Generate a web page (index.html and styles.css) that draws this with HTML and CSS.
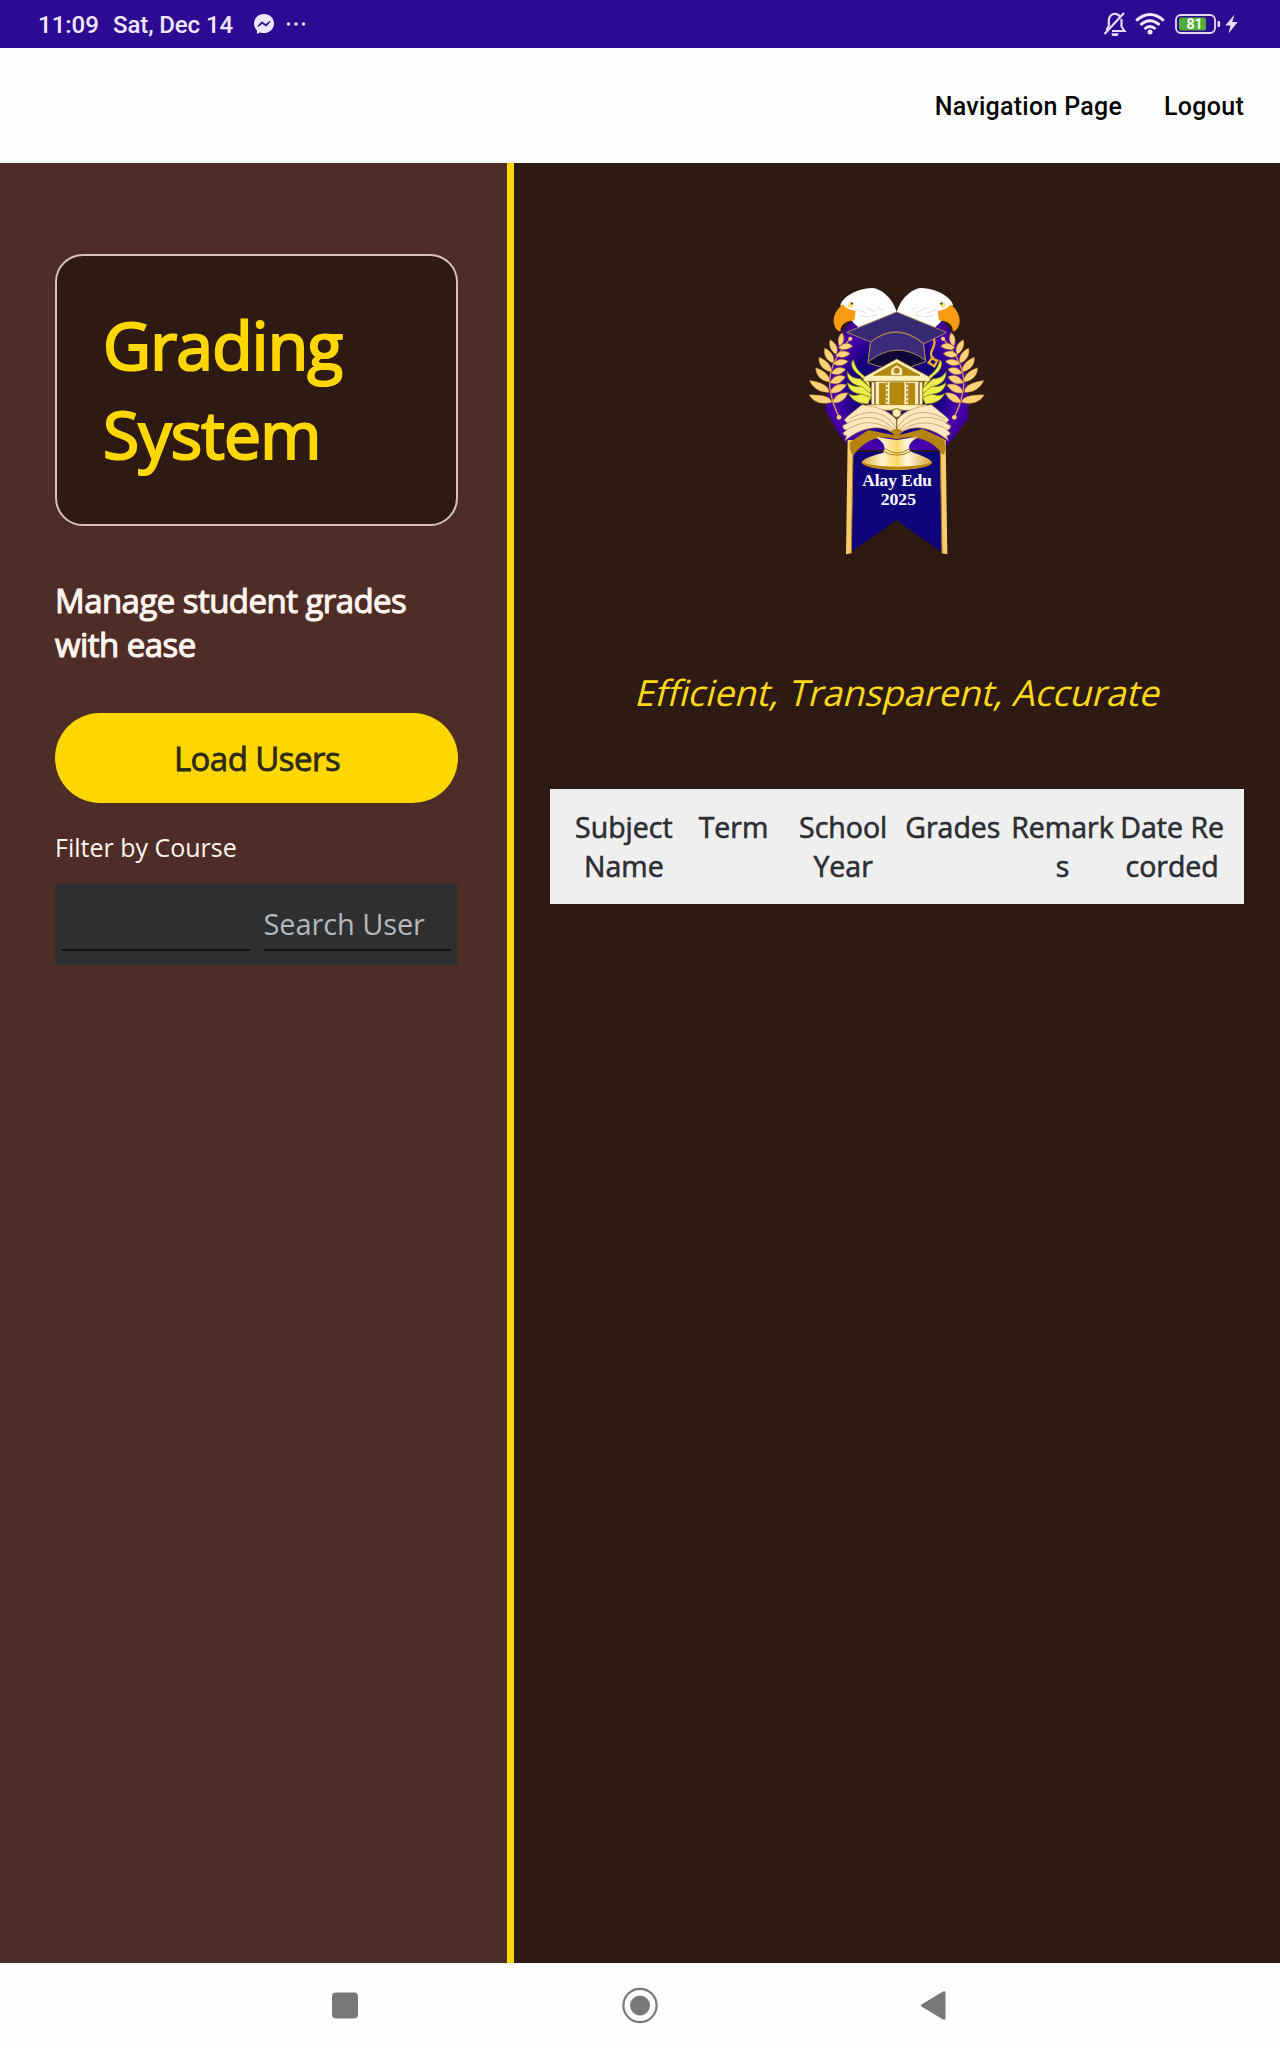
FILE: index.html
```html
<!DOCTYPE html>
<html lang="en">
<head>
<meta charset="utf-8">
<title>Grading System</title>
<link rel="stylesheet" href="styles.css">
</head>
<body>
<div class="screen">
  <div class="status">
    <span class="clock">11:09</span>
    <span class="date">Sat, Dec 14</span>
    <svg class="messenger" viewBox="0 0 20 20"><path fill="#efe6ff" d="M10 0C4.400 0 0 4.100 0 9.600c0 2.800 1.200 5.200 3 6.900V20l3-1.600c1.200.4 2.600.7 4 .7 5.600 0 10-4.100 10-9.600S15.600 0 10 0z"/><path d="M3.800 12.400l4-4.600 3.800 2.800 4.600-3.200-4 4.700-3.800-2.700z" fill="#2c0b92" stroke="#2c0b92" stroke-width="1"/></svg>
    <svg class="dots" viewBox="0 0 20 4"><g fill="#efe6ff"><circle cx="2.500" cy="2" r="1.700"/><circle cx="10" cy="2" r="1.700"/><circle cx="17.500" cy="2" r="1.700"/></g></svg>
    <div class="tray">
      <svg class="bell" viewBox="0 0 24 24"><g fill="none" stroke="#e9dcff" stroke-width="2.200"><path d="M17 4.500C13.500-.2 6.500 1.500 5.800 8v6L3.500 18M18.500 7v7.500l3 4.500H9"/><path d="M1.500 22L21 1"/></g><path d="M8.500 21.300h7a3.500 3.500 0 0 1-7 0z" fill="#e9dcff"/></svg>
      <svg class="wifi" viewBox="0 0 30 22"><g fill="none" stroke="#f0e8ff" stroke-width="2.900"><path d="M1.200 7.600Q15-4.400 28.800 7.600"/><path d="M5.400 12Q15 3.600 24.600 12"/><path d="M9.500 16Q15 11.200 20.500 16"/></g><circle cx="15" cy="19" r="2.500" fill="#f0e8ff"/></svg>
      <svg class="battery" viewBox="0 0 46 20"><rect x="1" y="1" width="39" height="18" rx="5" fill="none" stroke="#e6dcf8" stroke-width="1.800"/><rect x="4" y="3.600" width="27" height="12.800" rx="2" fill="#4fae35"/><path d="M42.500 7h1.500q1 0 1 1v4q0 1-1 1h-1.500z" fill="#e6dcf8"/><text class="charge" x="19.500" y="15.200" text-anchor="middle">81</text></svg>
      <svg class="bolt" viewBox="0 0 13 20"><path d="M9.500.5L.3 11.500h5.200L3.500 19.500 12.800 8H7.300z" fill="#e9dcff"/></svg>
    </div>
  </div>
  <nav class="topnav"><a class="nav-page">Navigation Page</a><a class="nav-out">Logout</a></nav>
  <main class="content">
    <aside class="side">
      <h1 class="title">Grading<br>System</h1>
      <p class="lead">Manage student grades<br>with ease</p>
      <button class="load">Load Users</button>
      <label class="filter">Filter by Course</label>
      <div class="search"><div class="field"></div><div class="field">Search User</div></div>
    </aside>
    <section class="detail">
      <svg class="logo" viewBox="0 0 630 900">
        <defs>
          <radialGradient id="glow" gradientUnits="userSpaceOnUse" cx="320" cy="350" r="240"><stop offset="0" stop-color="#120078"/><stop offset=".55" stop-color="#16007e"/><stop offset=".8" stop-color="#4a00b0"/><stop offset="1" stop-color="#3c0090"/></radialGradient>
          <linearGradient id="gold" x1="0" x2="1"><stop offset="0" stop-color="#e0b040"/><stop offset=".3" stop-color="#fff3d0"/><stop offset=".5" stop-color="#ffd86a"/><stop offset=".65" stop-color="#fff6dc"/><stop offset="1" stop-color="#d8a634"/></linearGradient>
          <g id="half">
            <path d="M320 125C305 78 268 54 245 54C205 56 162 76 151 104L190 158L205 172L262 154z" fill="#fff"/>
            <path d="M158 103C136 122 128 142 132 162C136 178 145 184 152 184C150 166 164 154 193 151L197 123C185 121 170 118 158 103z" fill="#f89a12"/>
            <path d="M176 95l14 6-5 13-12-3z" fill="#ffe36a"/><path d="M181 97l9 2-4 7z" fill="#222"/>
            <path d="M200 118l30 12 M210 137l28 4 M230 113l28 14 M244 139l20-5 M262 112l17 9" stroke="#cfcfda" stroke-width="2" fill="none"/>
            <path d="M181 205C138 256 105 310 124 376C128 401 138 421 146 440" fill="none" stroke="#d9a44c" stroke-width="4"/>
            <g fill="#ffd27a" stroke="#9c661e" stroke-width="1.500">
              <path d="M148 228C141 210 145 196 157 188C165 204 163 220 148 228z"/>
              <path d="M139 253C121 244 115 224 120 209C138 219 147 235 139 253z"/>
              <path d="M130 279C110 274 99 254 104 234C124 243 136 260 130 279z"/>
              <path d="M124 306C98 302 84 282 87 262C109 270 125 285 124 306z"/>
              <path d="M119 336C92 334 76 313 77 293C101 300 120 315 119 336z"/>
              <path d="M118 367C87 369 68 353 58 331C88 336 115 343 118 367z"/>
              <path d="M127 397C95 406 70 396 57 374C86 375 119 374 127 397z"/>
              <path d="M145 233C159 217 176 215 188 229C172 240 158 242 145 233z"/>
              <path d="M137 256C149 241 167 239 180 251C166 264 150 266 137 256z"/>
              <path d="M130 281C142 266 160 264 174 274C160 289 145 290 130 281z"/>
              <path d="M123 309C136 291 151 288 167 298C155 314 139 318 123 309z"/>
              <path d="M119 338C130 318 148 311 166 320C155 340 138 346 119 338z"/>
              <path d="M120 368C128 346 146 338 170 344C158 363 141 373 120 368z"/>
              <path d="M127 398C134 376 151 366 174 369C164 391 148 401 127 398z"/>
            </g>
            <circle cx="181" cy="206" r="6" fill="#ffd27a"/><circle cx="147" cy="442" r="7" fill="#ffd27a"/>
            <g fill="#eded50" stroke="#687500" stroke-width="2">
              <path d="M190 269C178 280 187 303 211 318L242 358L235 325C207 310 197 294 190 269z"/>
              <path d="M172 304C169 328 186 343 207 348L240 377L244 357L211 326C191 326 178 318 172 304z"/>
              <path d="M172 337C175 361 192 371 212 372L238 392L245 374L215 349C194 352 182 346 172 337z"/>
              <path d="M176 369C183 393 211 402 234 402L243 382L214 372C196 378 184 377 176 369z"/>
            </g>
            <path d="M173 510H190L184 850L168 853z" fill="#f8cc6a"/><path d="M189 540L184 850" stroke="#a77a20" stroke-width="3"/>
          </g>
        </defs>
        <path d="M185 153L320 128L460 155C505 205 541 290 535 444L490 507L454 540H186L145 490L106 420C120 310 125 210 185 153z" fill="url(#glow)"/>
        <path d="M188 545H453V845L320 750L184 845z" fill="#10047a"/>
        <use href="#half"/><use href="#half" transform="matrix(-1 0 0 1 640 0)"/>
        <g stroke="#a98651" stroke-width="3" stroke-linejoin="round">
          <path d="M234 279L242 216L400 218L407 275Q320 315 234 279z" fill="#100838"/>
          <path d="M170 187L320 126L470 187L402 221Q320 152 242 216z" fill="#372873"/>
          <path d="M242 216Q320 156 400 221L406 271Q320 207 234 276z" fill="#3c2b7b"/>
        </g>
        <path d="M431 206C444 230 409 245 430 267L442 272L433 289L416 278L430 259" fill="none" stroke="#edae38" stroke-width="7"/>
        <g fill="#fff0b9" stroke="#9a7410" stroke-width="2">
          <path d="M221 322L320 267L420 322V334H221z"/><path d="M250 316L320 278L390 316z" fill="#b58a0c"/>
          <path d="M302 317L303 296L320 285L338 296V317z"/><circle cx="320" cy="302" r="8" fill="#b58a0c"/>
          <path d="M256 334H386V410H256z"/>
          <path d="M268 340H286V404H268z M300 338H342V407H300z M356 340H374V404H356z" fill="#b58a0c"/>
          <path d="M232 404H410V421H232z"/>
          <path d="M291 337v68 M351 337v68" stroke-width="4" stroke-dasharray="8 5" fill="none"/>
          <path d="M244 336h10v68h-10zM388 336h10v68h-10z"/>
        </g>
        <path d="M181 515C176 536 184 552 190 556C230 505 270 495 320 508C370 495 425 505 459 556C471 543 463 523 464 508L398 477L320 497L235 480z" fill="#b78310"/>
        <path d="M257 501C277 514 291 530 280 548C252 555 215 566 215 579C242 606 398 606 426 579C424 565 381 553 360 544C351 526 364 513 385 500L320 510z" fill="url(#gold)"/>
        <path d="M215 577C257 594 379 595 426 577C424 606 226 608 215 577z" fill="#bb8610"/><path d="M283 534Q320 564 360 535M278 543Q320 568 364 543" fill="none" stroke="#a47b1b" stroke-width="3"/>
        <g fill="#ffe8c0" stroke="#b98a48" stroke-width="2">
          <path id="page" d="M320 499C280 457 214 470 165 512L170 497Q162 499 159 489L170 480Q158 479 158 467L172 460L163 450L172 440L216 404C258 410 296 420 320 450z"/>
          <use href="#page" transform="matrix(-1 0 0 1 640 0)"/>
          <path d="M169 461C229 430 278 437 320 488C362 436 421 430 477 461M169 480C222 447 272 452 320 493C369 451 421 449 476 480M177 447C232 418 283 417 320 476C357 417 412 418 465 447" fill="none"/>
        </g>
        <path d="M302 483L320 475L338 483L320 508z" fill="#b78310"/>
        <path d="M304 420h33l-17 23zM320 443v33" fill="#fff0b9" stroke="#8c6510" stroke-width="3"/><circle cx="320" cy="429" r="13" fill="#fff0b9" stroke="#8c6510" stroke-width="3"/>
        <text class="crest" x="217" y="648" textLength="209" lengthAdjust="spacingAndGlyphs">Alay Edu</text>
        <text class="crest" x="272" y="706" textLength="106" lengthAdjust="spacingAndGlyphs">2025</text>
      </svg>
      <p class="tagline">Efficient, Transparent, Accurate</p>
      <div class="grid-head"><span>Subject<br>Name</span><span>Term</span><span>School<br>Year</span><span>Grades</span><span>Remark<br>s</span><span>Date Re<br>corded</span></div>
    </section>
  </main>
  <footer class="sysnav">
    <svg viewBox="0 0 700 85" width="700" height="85"><g fill="#787878"><rect x="32" y="29.500" width="26" height="26" rx="4"/><circle cx="340" cy="42.500" r="10"/><path d="M621.500 41.500L643 28.500q2.500-1 2.500 1v26q0 2-2.500 1l-21.500-13q-1-1 0-2z"/></g><circle cx="340" cy="42.500" r="16.600" fill="none" stroke="#787878" stroke-width="2.200"/></svg>
  </footer>
</div>
</body>
</html>
```
FILE: styles.css
```css
* { box-sizing: border-box; }
body { margin: 0; font-family: "Open Sans", sans-serif; }
.screen { width: 1280px; height: 2048px; display: flex; flex-direction: column; background: #fff; }
.status { height: 48px; flex: none; display: flex; align-items: center; padding: 0 42px 0 38px; background: #2c0b92; color: #efe6ff; font: 500 24px Roboto, sans-serif; white-space: nowrap; }
.clock { width: 75px; padding-top: 1px; }
.date { width: 141px; padding-top: 1px; letter-spacing: -.1px; }
.messenger { width: 20px; height: 20px; }
.dots { width: 20px; height: 4px; margin: -1px 0 0 12px; }
.tray { margin-left: auto; display: flex; align-items: center; }
.bell { width: 24px; height: 24px; margin-right: 8px; }
.wifi { width: 30px; height: 22px; margin-right: 10px; }
.battery { width: 46px; height: 20px; margin-right: 4px; }
.charge { font: 700 14px Roboto, sans-serif; fill: #fff; }
.bolt { width: 13px; height: 20px; }
.topnav { height: 115px; flex: none; display: flex; justify-content: flex-end; align-items: center; gap: 42px; padding: 2px 36px 0; background: #fefefe; color: #050505; font: 500 25px Roboto, sans-serif; letter-spacing: .27px; white-space: nowrap; }
.content { flex: 1; display: flex; }
.side { width: 514px; padding: 91px 49px 0 55px; display: flex; flex-direction: column; border-right: 7px solid #ffd700; background: #4e2d27; color: #fff5ef; white-space: nowrap; }
.title { height: 272px; margin: 0; padding: 44px 46px; border: 2px solid #d3c3bb; border-radius: 28px; background: #2c1a13; color: #ffd700; font-size: 66px; font-weight: 400; line-height: 89px; letter-spacing: -.8px; -webkit-text-stroke: 2.2px #ffd700; }
.lead { margin: 53px 0 0; font-size: 33px; line-height: 44px; letter-spacing: -.55px; -webkit-text-stroke: 1.1px #fff5ef; }
.load { height: 90px; margin: 46px 0 0; padding: 0 0 0 1px; border: 0; border-radius: 45px; background: #ffd700; color: #2d2a18; font: 400 33px "Open Sans", sans-serif; letter-spacing: -.55px; -webkit-text-stroke: .8px #2d2a18; }
.filter { margin-top: 27px; font-size: 25px; line-height: 34px; }
.search { height: 81px; margin-top: 20px; padding: 0 7px 14px; display: flex; gap: 14px; background: #2d2f31; color: #b5b7b9; }
.field { flex: 1; border-bottom: 2px solid #111416; padding-top: 20px; font-size: 29px; line-height: 40px; letter-spacing: -.1px; }
.detail { flex: 1; padding: 107px 36px 0; display: flex; flex-direction: column; align-items: center; background: #2c1a13; }
.logo { width: 210px; height: 300px; margin-right: 4px; }
.crest { font: 700 52px "Liberation Serif", serif; fill: #fff; }
.tagline { margin: 98px 0 0 5px; font-size: 36px; line-height: 50px; color: #ffd91a; white-space: nowrap; transform: skewX(-14deg); }
.grid-head { align-self: stretch; height: 115px; margin-top: 71px; padding: 19px 17px 0 19px; display: grid; grid-template-columns: repeat(6, 1fr); background: #efefef; color: #2d2d32; font-size: 28.5px; line-height: 39px; text-align: center; white-space: nowrap; -webkit-text-stroke: .6px #2d2d32; }
.sysnav { height: 85px; flex: none; padding-left: 300px; background: #fefefe; }
```
